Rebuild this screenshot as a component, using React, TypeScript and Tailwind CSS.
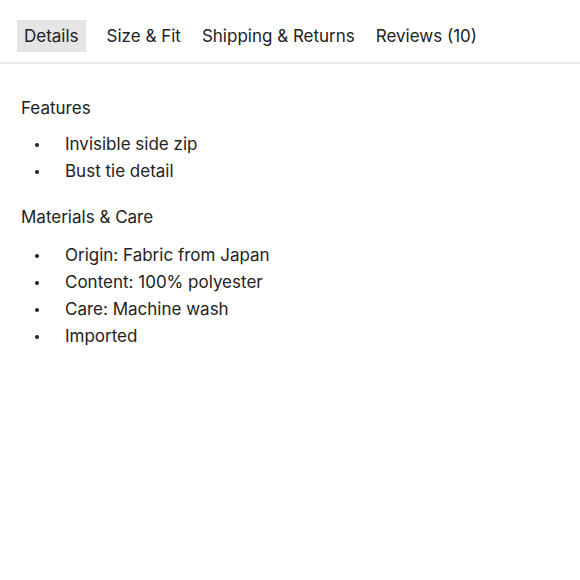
export default function App() {
  const tabs = ["Details", "Size & Fit", "Shipping & Returns", "Reviews (10)"];
  const Item = ({ t }: { t: string }) => (
    <li className="flex items-center leading-[27px]">
      <span className="w-[44px] flex pl-[14px]"><span className="w-[4px] h-[4px] rounded-full bg-[#222]" /></span>
      {t}
    </li>
  );
  return (
    <div className="w-[580px] h-[580px] bg-white text-[#222] text-[17px]" style={{ fontFamily: "Inter, sans-serif" }}>
      <div className="flex items-center gap-[9px] pl-[17px] pt-[20px] pb-[10px] border-b-2 border-[#e8e8e8]">
        {tabs.map((t, i) => (
          <div key={t} className={`h-[32px] flex items-center pt-[2px] ${i === 0 ? "bg-[#e5e5e5] mr-[6px] px-[7px]" : "px-[6px]"}`}>{t}</div>
        ))}
      </div>
      <div className="pl-[21px] pt-[31px]">
        <div className="leading-[27px]">Features</div>
        <ul className="mt-[9px]">
          {["Invisible side zip", "Bust tie detail"].map((t) => <Item key={t} t={t} />)}
        </ul>
        <div className="leading-[27px] mt-[19px]">Materials &amp; Care</div>
        <ul className="mt-[11px]">
          {["Origin: Fabric from Japan", "Content: 100% polyester", "Care: Machine wash", "Imported"].map((t) => <Item key={t} t={t} />)}
        </ul>
      </div>
    </div>
  );
}
